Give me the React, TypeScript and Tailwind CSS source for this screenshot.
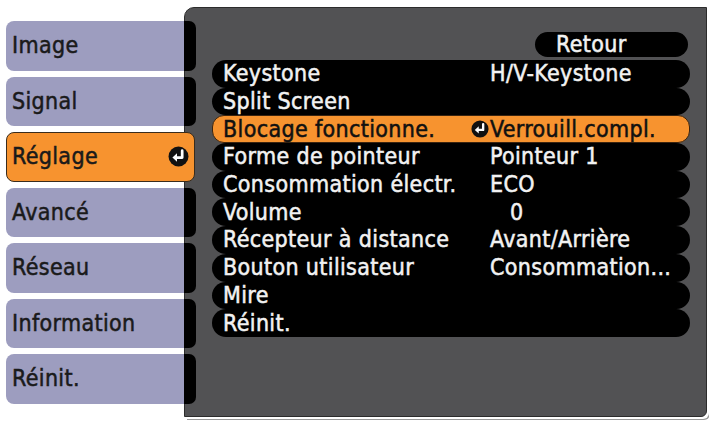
import React from "react";

const tabs = ["Image", "Signal", "Réglage", "Avancé", "Réseau", "Information", "Réinit."];

const rows: { label: string; value: string; pad?: boolean }[] = [
  { label: "Keystone", value: "H/V-Keystone" },
  { label: "Split Screen", value: "" },
  { label: "Blocage fonctionne.", value: "Verrouill.compl." },
  { label: "Forme de pointeur", value: "Pointeur 1" },
  { label: "Consommation électr.", value: "ECO" },
  { label: "Volume", value: "0", pad: true },
  { label: "Récepteur à distance", value: "Avant/Arrière" },
  { label: "Bouton utilisateur", value: "Consommation..." },
  { label: "Mire", value: "" },
  { label: "Réinit.", value: "" },
];

function EnterIcon({ size = 20 }: { size?: number }) {
  return (
    <svg width={size} height={size} viewBox="0 0 20 20">
      <circle cx="10" cy="10" r="9.5" fill="#111" />
      <path d="M13.5 4.5 V11 H8" stroke="#fff" strokeWidth="2.6" fill="none" strokeLinecap="round" strokeLinejoin="round" />
      <path d="M4.2 11 L8.6 7 L8.6 15 Z" fill="#fff" />
    </svg>
  );
}

export default function App() {
  const selectedTab = "Réglage";
  const selectedRow = "Blocage fonctionne.";
  return (
    <div className="w-[709px] h-[423px] bg-white flex font-['DejaVu_Sans_Condensed','DejaVu_Sans',sans-serif] text-[23px] leading-none tracking-[0.35px] [-webkit-text-stroke:0.5px_currentColor]">
      <div className="relative z-10 ml-[6px] mt-[21px] flex w-[190px] shrink-0 flex-col gap-[6px]">
        {tabs.map((t) =>
          t === selectedTab ? (
            <div
              key={t}
              className="flex h-[49.5px] w-[189px] items-center justify-between rounded-lg border border-[#3a2c1c] bg-[#f7932f] pl-[5px] pr-[5px] text-[#1a1a1a]"
            >
              <span>{t}</span>
              <EnterIcon size={21} />
            </div>
          ) : (
            <div key={t} className="flex h-[49.5px]">
              <div className="flex flex-1 items-center rounded-l-lg bg-[#9d9dbf] pl-[6px] text-[#1a1a1a]">{t}</div>
              <div className="w-[12px] rounded-r-[7px] bg-black" />
            </div>
          )
        )}
      </div>
      <div className="-ml-[12px] mt-[7px] flex h-[410px] w-[523px] flex-col rounded-tl-[10px] rounded-br-[6px] border border-[#2c2c2c] bg-[#525254] pl-[27px] pt-[24px] text-[#f2f2f2] shadow-[2px_2px_0_0_#fff,3px_3px_0_0_#9a9a9a]">
        <div className="ml-[323px] flex h-[25px] w-[153px] items-center rounded-full bg-black pl-[21px]">Retour</div>
        <div className="mt-[3px] flex w-[478px] flex-col">
          {rows.map((r) =>
            r.label === selectedRow ? (
              <div
                key={r.label}
                className="flex h-[27.7px] items-center rounded-[12px] border border-[#3a2410] bg-[#f7932f] pl-[10px] text-[#111]"
              >
                <span className="w-[248px] shrink-0 whitespace-nowrap">{r.label}</span>
                <span className="flex w-[19px] shrink-0 items-center">
                  <EnterIcon size={18} />
                </span>
                <span className="whitespace-nowrap">{r.value}</span>
              </div>
            ) : (
              <div key={r.label} className="flex h-[27.7px] items-center rounded-full bg-black pl-[11px]">
                <span className="w-[267px] shrink-0 whitespace-nowrap">{r.label}</span>
                <span className={`whitespace-nowrap ${r.pad ? "pl-[20px]" : ""}`}>{r.value}</span>
              </div>
            )
          )}
        </div>
      </div>
    </div>
  );
}
